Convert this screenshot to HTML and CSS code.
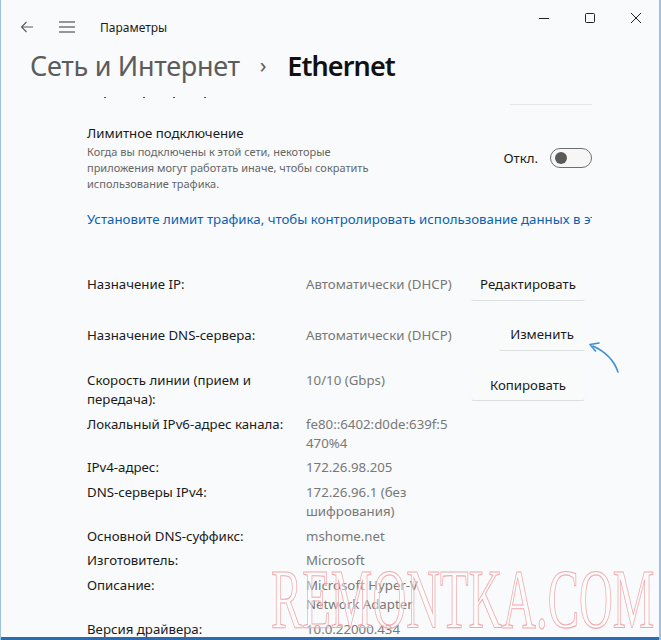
FILE: index.html
```html
<!DOCTYPE html>
<html lang="ru">
<head>
<meta charset="utf-8">
<title>Параметры</title>
<link rel="stylesheet" href="styles.css">
</head>
<body>
<div class="window">
  <div class="titlebar">
    <div class="tb-left">
      <span class="tb-icon back">
        <svg width="14" height="14" viewBox="0 0 14 14"><path d="M13 7H1.5M6.5 2L1.5 7l5 5" fill="none" stroke="#5a5a5a" stroke-width="1.1"/></svg>
      </span>
      <span class="tb-icon menu">
        <svg width="16" height="12" viewBox="0 0 16 12"><path d="M0 1h16M0 6h16M0 11h16" fill="none" stroke="#333" stroke-width="1.1"/></svg>
      </span>
      <span class="app-title">Параметры</span>
    </div>
    <div class="tb-controls">
      <span class="ctl"><svg width="10" height="10" viewBox="0 0 10 10"><path d="M0 5.5h10" stroke="#222" stroke-width="1"/></svg></span>
      <span class="ctl"><svg width="10" height="10" viewBox="0 0 10 10"><rect x="0.5" y="0.5" width="9" height="9" rx="1" fill="none" stroke="#222" stroke-width="1"/></svg></span>
      <span class="ctl"><svg width="10" height="10" viewBox="0 0 10 10"><path d="M0 0l10 10M10 0L0 10" stroke="#222" stroke-width="1"/></svg></span>
    </div>
  </div>

  <h1 class="page-title"><span class="crumb">Сеть и Интернет</span><span class="chev">›</span><span class="current">Ethernet</span></h1>

  <div class="content">
    <div class="cut-row">
      <div class="dots"><i></i><i></i><i></i><i></i></div>
      <div class="cut-btn"></div>
    </div>

    <div class="metered">
      <div class="metered-text">
        <div class="label">Лимитное подключение</div>
        <div class="desc">Когда вы подключены к этой сети, некоторые приложения могут работать иначе, чтобы сократить использование трафика.</div>
      </div>
      <div class="toggle-wrap">
        <span class="toggle-label">Откл.</span>
        <span class="toggle"><span class="knob"></span></span>
      </div>
    </div>

    <div class="link">Установите лимит трафика, чтобы контролировать использование данных в этой сети</div>

    <div class="props">
      <div class="prop with-btn">
        <div class="k">Назначение IP:</div>
        <div class="v">Автоматически (DHCP)</div>
        <div class="b"><button class="btn btn-edit">Редактировать</button></div>
      </div>
      <div class="prop with-btn">
        <div class="k">Назначение DNS-сервера:</div>
        <div class="v">Автоматически (DHCP)</div>
        <div class="b"><button class="btn btn-change">Изменить</button></div>
      </div>
      <div class="prop speed">
        <div class="k">Скорость линии (прием и передача):</div>
        <div class="v">10/10 (Gbps)</div>
        <div class="b"><button class="btn btn-copy">Копировать</button></div>
      </div>
      <div class="prop">
        <div class="k">Локальный IPv6-адрес канала:</div>
        <div class="v">fe80::6402:d0de:639f:5 470%4</div>
      </div>
      <div class="prop">
        <div class="k">IPv4-адрес:</div>
        <div class="v">172.26.98.205</div>
      </div>
      <div class="prop">
        <div class="k">DNS-серверы IPv4:</div>
        <div class="v">172.26.96.1 (без шифрования)</div>
      </div>
      <div class="prop">
        <div class="k">Основной DNS-суффикс:</div>
        <div class="v">mshome.net</div>
      </div>
      <div class="prop">
        <div class="k">Изготовитель:</div>
        <div class="v">Microsoft</div>
      </div>
      <div class="prop">
        <div class="k">Описание:</div>
        <div class="v">Microsoft Hyper-V Network Adapter</div>
      </div>
      <div class="prop">
        <div class="k">Версия драйвера:</div>
        <div class="v">10.0.22000.434</div>
      </div>
    </div>
  </div>

  <svg class="arrow" width="44" height="44" viewBox="0 0 44 44">
    <path d="M38 42 C34 30 26 22 13 16" fill="none" stroke="#3d8fd6" stroke-width="1.6" stroke-linecap="round"/>
    <path d="M19 13 L10 14.5 L15.5 21" fill="none" stroke="#3d8fd6" stroke-width="1.6" stroke-linecap="round" stroke-linejoin="round"/>
  </svg>

  <div class="watermark">REMONTKA.COM</div>
  <div class="taskbar"></div>
</div>
</body>
</html>
```

FILE: styles.css
```css
* { box-sizing: border-box; }
html, body { margin: 0; padding: 0; }
body {
  width: 661px;
  height: 640px;
  overflow: hidden;
  font-family: "Noto Sans", "Open Sans", sans-serif;
  background: #f8fafb;
}
.window {
  position: relative;
  width: 661px;
  height: 640px;
  overflow: hidden;
  background: #f8fafb;
  border-left: 1px solid #9fc0df;
  border-right: 2px solid #9fc0df;
}
.titlebar {
  display: flex;
  justify-content: space-between;
  height: 48px;
}
.tb-left {
  display: flex;
  align-items: center;
  height: 48px;
  padding-top: 6px;
  padding-left: 19px;
}
.tb-icon { display: flex; align-items: center; }
.back { width: 39px; }
.menu { width: 41px; }
.app-title {
  font-size: 12px;
  color: #1a1a1a;
}
.tb-controls {
  display: flex;
  padding-top: 12px;
}
.ctl {
  width: 46px;
  height: 12px;
  display: flex;
  justify-content: center;
  align-items: center;
}
.page-title {
  margin: 0;
  padding-left: 29px;
  height: 36px;
  display: flex;
  align-items: center;
  font-size: 27px;
  font-weight: 400;
  letter-spacing: -0.3px;
  line-height: 36px;
}
.crumb { color: #5c5c5c; }
.chev { color: #5c5c5c; font-size: 22px; margin: 0 21px 4px 20px; }
.current { color: #111; font-weight: 600; letter-spacing: -0.9px; }

.content {
  width: 591px;
  padding-left: 86px;
  font-size: 13.25px;
}
.cut-row {
  height: 22px;
  display: flex;
  justify-content: space-between;
  align-items: flex-start;
}
.dots { display: flex; padding-top: 13px; }
.dots i { display: block; width: 2px; height: 1px; background: #555; }
.dots i:nth-child(1) { margin-left: 17px; margin-right: 37px; }
.dots i:nth-child(2) { margin-right: 28px; }
.dots i:nth-child(3) { margin-right: 29px; }
.cut-btn {
  width: 82px;
  height: 21px;
  border-bottom: 1px solid #e3e5e6;
}
.metered {
  display: flex;
  justify-content: space-between;
  align-items: flex-start;
  padding-top: 18px;
}
.metered-text { width: 292px; }
.label { color: #1b1b1b; line-height: 19px; }
.desc { font-size: 11px; color: #666; line-height: 16px; margin-top: 1px; }
.toggle-wrap { display: flex; align-items: center; margin-top: 24px; }
.toggle-label { color: #1b1b1b; margin-right: 12px; }
.toggle {
  width: 42px;
  height: 20px;
  border: 1px solid #6f6f6f;
  border-radius: 10px;
  display: flex;
  align-items: center;
  padding-left: 4px;
  background: #f6f6f6;
}
.knob { width: 12px; height: 12px; border-radius: 50%; background: #5a5a5a; }

.link {
  margin-top: 17px;
  color: #0d5fb2;
  white-space: nowrap;
  overflow: hidden;
  width: 505px;
  line-height: 20px;
}

.props { margin-top: 30px; }
.prop {
  display: grid;
  grid-template-columns: 219px 164px 116px;
  line-height: 19px;
  color: #1b1b1b;
  padding-bottom: 5.7px;
}
.prop .v { color: #787878; padding-right: 10px; }
.prop.with-btn { align-items: center; height: 51px; padding: 0; }
.prop .b { display: flex; justify-content: flex-end; align-items: flex-start; }
.prop.speed { margin-top: 10px; }
.prop.speed .k { padding-right: 40px; }
.btn {
  font: inherit;
  color: #1b1b1b;
  background: #f9fbfb;
  border: 1px solid #f8fafa;
  border-bottom-color: #dcdfe0;
  border-radius: 4px;
  height: 32px;
  padding: 0;
}
.btn-edit { width: 116px; }
.btn-change { width: 88px; margin-top: -2px; }
.btn-copy { width: 116px; margin-top: -2px; }

.arrow {
  position: absolute;
  left: 579px;
  top: 330px;
}
.watermark {
  position: absolute;
  left: 270px;
  top: 558px;
  font-family: "Liberation Serif", serif;
  font-size: 84px;
  line-height: 84px;
  color: rgba(255, 255, 255, 0.4);
  -webkit-text-stroke: 1.2px #f2a9ad;
  transform: scaleX(0.557);
  transform-origin: left top;
  white-space: nowrap;
  pointer-events: none;
}
.taskbar {
  position: absolute;
  left: 0;
  right: 0;
  bottom: 0;
  height: 3px;
  background: #2d6bb0;
}
```
